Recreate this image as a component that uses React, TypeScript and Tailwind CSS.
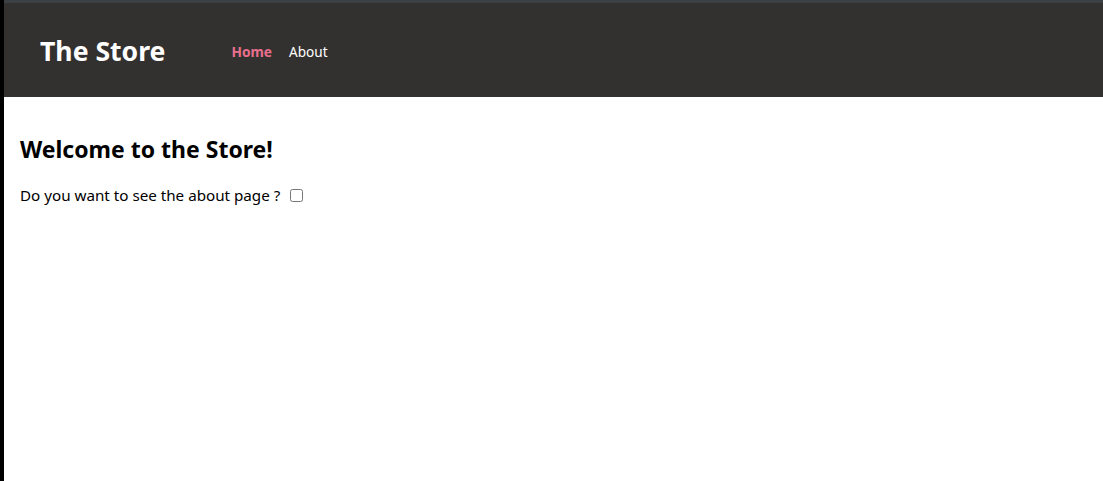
import React, { useState } from 'react';

export default function App() {
  const [checked, setChecked] = useState(false);
  return (
    <div className="flex min-h-[481px] bg-black font-['Noto_Sans',sans-serif]">
      <div className="w-[4px] shrink-0" />
      <div className="flex flex-1 flex-col bg-white">
        <div className="h-[3px] bg-[#3b4045]" />
        <header className="flex h-[94px] items-center bg-[#333130] pl-[36px] pt-[3px]">
          <h1 className="text-[26.6px] font-bold leading-none text-white">The Store</h1>
          <nav className="ml-[66px] flex gap-[17px] text-[14px] leading-none">
            <a className="text-[13.7px] font-bold text-[#e8708d]">Home</a>
            <a className="text-[13.6px] text-white">About</a>
          </nav>
        </header>
        <main className="px-[16px] pt-[41px]">
          <h2 className="text-[23px] font-bold leading-none text-black">Welcome to the Store!</h2>
          <label className="mt-[23px] flex items-center text-[15.2px] text-black">
            Do you want to see the about page ?
            <input
              type="checkbox"
              checked={checked}
              onChange={() => setChecked(!checked)}
              className="ml-[10px] h-[13px] w-[13px]"
            />
          </label>
        </main>
      </div>
    </div>
  );
}
